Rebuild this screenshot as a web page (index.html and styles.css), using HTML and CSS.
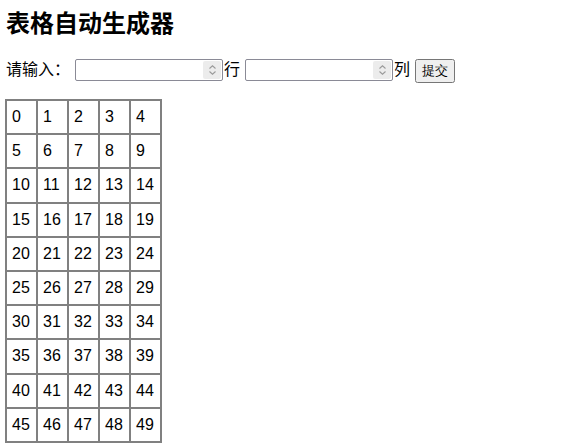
FILE: index.html
```html
<!DOCTYPE html>
<html lang="zh">
<head>
<meta charset="utf-8">
<title>表格自动生成器</title>
<link rel="stylesheet" href="styles.css">
</head>
<body>
<h2 class="title">表格自动生成器</h2>
<div class="form">
  <span class="label">请输入：</span>
  <span class="field"><input class="num" type="number"><span class="spin"><svg width="9" height="12" viewBox="0 0 9 12"><path d="M1.5 4.5 L4.5 1.8 L7.5 4.5 M1.5 7.5 L4.5 10.2 L7.5 7.5" fill="none" stroke="#9a9a9a" stroke-width="1.1"/></svg></span></span>
  <span class="unit">行</span>
  <span class="field field2"><input class="num" type="number"><span class="spin"><svg width="9" height="12" viewBox="0 0 9 12"><path d="M1.5 4.5 L4.5 1.8 L7.5 4.5 M1.5 7.5 L4.5 10.2 L7.5 7.5" fill="none" stroke="#9a9a9a" stroke-width="1.1"/></svg></span></span>
  <span class="unit">列</span>
  <button class="btn">提交</button>
</div>
<table class="grid">
<tr><td>0</td><td>1</td><td>2</td><td>3</td><td>4</td></tr>
<tr><td>5</td><td>6</td><td>7</td><td>8</td><td>9</td></tr>
<tr><td>10</td><td>11</td><td>12</td><td>13</td><td>14</td></tr>
<tr><td>15</td><td>16</td><td>17</td><td>18</td><td>19</td></tr>
<tr><td>20</td><td>21</td><td>22</td><td>23</td><td>24</td></tr>
<tr><td>25</td><td>26</td><td>27</td><td>28</td><td>29</td></tr>
<tr><td>30</td><td>31</td><td>32</td><td>33</td><td>34</td></tr>
<tr><td>35</td><td>36</td><td>37</td><td>38</td><td>39</td></tr>
<tr><td>40</td><td>41</td><td>42</td><td>43</td><td>44</td></tr>
<tr><td>45</td><td>46</td><td>47</td><td>48</td><td>49</td></tr>
</table>
</body>
</html>
```
FILE: styles.css
```css
body {
  margin: 0;
  padding: 7px 5px;
  font-family: "Liberation Sans", "Noto Sans CJK SC", sans-serif;
  font-size: 16px;
  color: #000;
  background: #fff;
}
.title {
  margin: 0 0 0 1px;
  font-size: 24px;
  line-height: 34px;
  font-weight: bold;
}
.form {
  margin: 17px 0 0 1px;
  display: flex;
  align-items: center;
  height: 24px;
  line-height: 24px;
}
.label {
  margin-right: 5px;
}
.field {
  display: inline-flex;
  align-items: stretch;
  width: 148px;
  height: 22px;
  box-sizing: border-box;
  border: 1px solid #8a8a96;
  border-radius: 2px;
  background: #fff;
  padding: 1px;
}
.field2 {
  margin-left: 5px;
}
.num {
  flex: 1;
  min-width: 0;
  border: none;
  outline: none;
  padding: 0 2px;
  margin: 0;
  font-size: 13px;
  background: transparent;
  -moz-appearance: textfield;
  appearance: textfield;
}
.num::-webkit-inner-spin-button,
.num::-webkit-outer-spin-button {
  -webkit-appearance: none;
  margin: 0;
}
.spin {
  width: 18px;
  background: #ececec;
  border-radius: 2px;
  display: flex;
  align-items: center;
  justify-content: center;
}
.unit {
  margin-left: 1px;
}
.btn {
  margin-left: 5px;
  height: 24px;
  font-size: 13px;
  padding: 1px 5px;
  margin-top: 2px;
}
.grid {
  margin-top: 17px;
  border: 1px solid #808080;
  border-spacing: 0;
}
.grid td {
  border: 1px solid #808080;
  padding: 7px 5px;
  width: 19px;
  line-height: 18.2px;
}
```
